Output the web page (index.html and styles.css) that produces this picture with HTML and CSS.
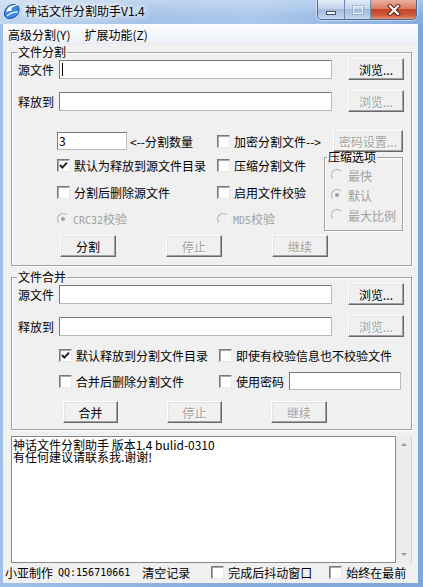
FILE: index.html
```html
<!DOCTYPE html>
<html>

<head>
	<meta charset="utf-8">
	<meta name="viewport" content="width=device-width, initial-scale=1">
	<title>神话文件分割助手V1.4</title>
	<link rel="stylesheet" href="styles.css">
</head>

<body>
	<div class="window">
		<div class="titlebar">
			<svg class="app-icon" width="18" height="18" viewBox="0 0 18 18">
				<path d="M1.5 12 C1.5 7 5 3 10 2.5 C14 2.2 16.5 4.5 16 8.5 C15.5 13.5 11 16.5 6 16.5 C3.5 16.5 1.5 14.5 1.5 12Z" fill="#3c86dc" stroke="#1c4f9c" stroke-width="1"/>
				<path d="M3 10 C4 6 7 3.5 11 3 C9 5 8 7 8.5 9 C6.5 9 4.5 9.5 3 10Z" fill="#fff"/>
				<path d="M4 14 C7 11 11 10 15 10" stroke="#d6ecff" stroke-width="1.6" fill="none"/>
				<path d="M9 5 L15 2" stroke="#fff" stroke-width="1.2"/>
			</svg>
			<span class="title">神话文件分割助手V1.4</span>
			<div class="caption-buttons">
				<span class="cap min"><i></i></span>
				<span class="cap max"><i></i></span>
				<span class="cap close">
					<svg width="14" height="12" viewBox="0 0 14 12">
						<path d="M3 2 L11 10 M11 2 L3 10" stroke="#5a1a10" stroke-width="4" stroke-linecap="square"/>
						<path d="M3 2 L11 10 M11 2 L3 10" stroke="#fff" stroke-width="2.2" stroke-linecap="square"/>
					</svg>
				</span>
			</div>
		</div>

		<div class="frame">
			<div class="client">
				<div class="menubar">
					<span>高级分割(Y)</span>
					<span>扩展功能(Z)</span>
				</div>

				<fieldset class="group split">
					<legend>文件分割</legend>
					<div class="file-row">
						<span class="row-label">源文件</span>
						<div class="edit path"><span class="caret"></span></div>
						<button class="btn browse">浏览...</button>
					</div>
					<div class="file-row">
						<span class="row-label">释放到</span>
						<div class="edit path"></div>
						<button class="btn browse" disabled>浏览...</button>
					</div>

					<div class="split-grid">
						<div class="count-cell">
							<div class="edit count">3</div>
							<span>&lt;--分割数量</span>
						</div>
						<div class="encrypt-cell">
							<label class="check"><span class="box"></span>加密分割文件--&gt;</label>
							<button class="btn pwd" disabled>密码设置...</button>
						</div>
						<label class="check checked"><span class="box"></span>默认为释放到源文件目录</label>
						<label class="check"><span class="box"></span>压缩分割文件</label>
						<fieldset class="compress">
							<legend>压缩选项</legend>
							<label class="radio off"><span class="dot"></span>最快</label>
							<label class="radio off on"><span class="dot"></span>默认</label>
							<label class="radio off"><span class="dot"></span>最大比例</label>
						</fieldset>
						<label class="check"><span class="box"></span>分割后删除源文件</label>
						<label class="check"><span class="box"></span>启用文件校验</label>
						<label class="radio off on"><span class="dot"></span><span><span class="mono">CRC32</span>校验</span></label>
						<label class="radio off"><span class="dot"></span><span><span class="mono">MD5</span>校验</span></label>
					</div>

					<div class="action-row">
						<button class="btn act">分割</button>
						<button class="btn act" disabled>停止</button>
						<button class="btn act" disabled>继续</button>
					</div>
				</fieldset>

				<fieldset class="group merge">
					<legend>文件合并</legend>
					<div class="file-row">
						<span class="row-label">源文件</span>
						<div class="edit path"></div>
						<button class="btn browse">浏览...</button>
					</div>
					<div class="file-row">
						<span class="row-label">释放到</span>
						<div class="edit path"></div>
						<button class="btn browse" disabled>浏览...</button>
					</div>

					<div class="merge-grid">
						<label class="check checked"><span class="box"></span>默认释放到分割文件目录</label>
						<label class="check"><span class="box"></span>即使有校验信息也不校验文件</label>
						<label class="check"><span class="box"></span>合并后删除分割文件</label>
						<div class="pwd-cell">
							<label class="check"><span class="box"></span>使用密码</label>
							<div class="edit pwd-edit"></div>
						</div>
					</div>

					<div class="action-row merge-actions">
						<button class="btn act">合并</button>
						<button class="btn act" disabled>停止</button>
						<button class="btn act" disabled>继续</button>
					</div>
				</fieldset>

				<div class="log">
					<div class="log-text">
						<div class="log-line">神话文件分割助手 版本1.4 bulid-0310</div>
						<div class="log-line">有任何建议请联系我.谢谢!</div>
					</div>
					<div class="scrollbar">
						<span class="arrow up"></span>
						<span class="arrow down"></span>
					</div>
				</div>

				<div class="statusbar">
					<span class="author">小亚制作</span>
					<span class="mono qq">QQ:156710661</span>
					<span class="clear">清空记录</span>
					<label class="check shake"><span class="box"></span>完成后抖动窗口</label>
					<label class="check ontop"><span class="box"></span>始终在最前</label>
				</div>
			</div>
		</div>
	</div>
</body>

</html>
```

FILE: styles.css
```css
* {
	box-sizing: border-box;
}

html,
body {
	margin: 0;
}

body {
	width: 423px;
	height: 587px;
	overflow: hidden;
	font-family: "Noto Sans CJK SC", sans-serif;
	font-size: 12px;
	color: #000;
	background: #86acde;
}

.window {
	width: 423px;
	height: 587px;
	display: flex;
	flex-direction: column;
	background: linear-gradient(to right, #9fc0ea, #86acde 50%, #7ea6da);
}

/* title bar */

.titlebar {
	height: 24px;
	display: flex;
	align-items: flex-start;
	padding-right: 6px;
	background:
		linear-gradient(to bottom, rgba(255, 255, 255, 0.3), rgba(255, 255, 255, 0) 70%),
		linear-gradient(to right, #c1d7f0, #a4c2e9 35%, #abc8eb 60%, #85acdf);
}

.app-icon {
	margin: 2px 0 0 3px;
	flex: none;
}

.title {
	margin: 4px 0 0 4px;
	line-height: 14px;
	text-shadow: 0 0 4px #fff, 0 0 8px #fff, 0 0 10px #fff;
}

.caption-buttons {
	display: flex;
	margin-left: auto;
	height: 20px;
	border: 1px solid #4a6890;
	border-top: 0;
	border-radius: 0 0 5px 5px;
	overflow: hidden;
	box-shadow: 0 0 0 1px rgba(255, 255, 255, 0.45);
}

.cap {
	display: flex;
	align-items: center;
	justify-content: center;
	height: 100%;
}

.cap.min,
.cap.max {
	background: linear-gradient(to bottom, #e3ecf7, #c2d4ea 45%, #a4bddd 50%, #b9cfeb 90%, #cfe0f4);
	border-right: 1px solid #6f8aae;
}

.cap.min {
	width: 27px;
}

.cap.max {
	width: 26px;
}

.cap.min i {
	width: 10px;
	height: 4px;
	margin-top: 6px;
	background: #fff;
	border: 1px solid #3d4f66;
}

.cap.max i {
	width: 10px;
	height: 8px;
	border: 1px solid rgba(255, 255, 255, 0.75);
	box-shadow: 0 0 0 1px rgba(90, 120, 160, 0.35);
}

.cap.close {
	width: 45px;
	background: linear-gradient(to bottom, #eab0a1, #dc7c63 45%, #c6442a 50%, #cd5a3a 80%, #e59474);
}

/* window body */

.frame {
	flex: 1;
	display: flex;
	padding: 0 5px 4px 3px;
}

.client {
	flex: 1;
	display: flex;
	flex-direction: column;
	background: #f0f0f0;
}

.menubar {
	height: 20px;
	display: flex;
	align-items: center;
	gap: 14px;
	padding: 1px 0 0 5px;
	background: linear-gradient(to bottom, #fbfcfe, #eef2f8);
	border-bottom: 1px solid #e6ebf2;
}

/* group boxes */

.group {
	width: 401px;
	margin: 0 0 0 8px;
	padding: 0 7px 8px 6px;
	border: 1px solid #a0a0a0;
	box-shadow: inset 1px 1px 0 #fff, 1px 1px 0 #fff;
	min-width: 0;
}

.group legend,
.compress legend {
	padding: 0 1px;
	margin-left: -1px;
	line-height: 12px;
}

.group.split {
	margin-top: 2px;
}

.group.merge {
	margin-top: 5px;
	padding-bottom: 6px;
}

.file-row {
	display: flex;
	align-items: center;
	height: 22px;
}

.file-row + .file-row {
	margin-top: 10px;
}

.row-label {
	width: 41px;
}

.edit {
	height: 19px;
	background: #fff;
	border: 1px solid;
	border-color: #7a7a7a #b9b9b9 #b9b9b9 #7a7a7a;
	line-height: 16px;
	padding-left: 2px;
}

.edit.path {
	width: 273px;
}

.caret {
	display: inline-block;
	width: 1px;
	height: 13px;
	margin-top: 2px;
	background: #000;
	vertical-align: top;
}

.btn {
	height: 22px;
	padding: 0;
	font-family: "Noto Sans CJK SC", sans-serif;
	font-size: 12px;
	color: #000;
	background: #f0f0f0;
	border: 1px solid;
	border-color: #fff #696969 #696969 #fff;
	box-shadow: inset -1px -1px 0 #a0a0a0, inset 1px 1px 0 #e3e3e3;
}

.btn:disabled {
	color: #a0a0a0;
	text-shadow: 1px 1px 0 #fff;
}

.btn.browse {
	width: 56px;
	margin-left: auto;
}

/* split grid */

.split-grid {
	display: grid;
	grid-template-columns: 160px 107px 79px;
	grid-template-rows: 22px 27px 27px 25px;
	align-items: center;
	margin: 18px 0 0 39px;
}

.count-cell {
	display: flex;
	align-items: center;
	gap: 3px;
}

.edit.count {
	width: 70px;
	height: 18px;
	line-height: 15px;
	padding-left: 1px;
}

.encrypt-cell {
	grid-column: 2 / 4;
	display: flex;
	align-items: center;
}

.btn.pwd {
	width: 70px;
	margin-left: auto;
}

.check,
.radio {
	display: flex;
	align-items: center;
	gap: 4px;
	white-space: nowrap;
}

.box {
	width: 13px;
	height: 13px;
	flex: none;
	background: #fff;
	border: 1px solid;
	border-color: #7a7a7a #e8e8e8 #e8e8e8 #7a7a7a;
	box-shadow: inset 1px 1px 0 #a8a8a8;
}

.check.checked .box {
	background: #fff url("data:image/svg+xml,%3Csvg xmlns='http://www.w3.org/2000/svg' width='11' height='11'%3E%3Cpath d='M2 5 L4.3 7.6 L9 2.6' stroke='%23202020' stroke-width='2' fill='none'/%3E%3C/svg%3E") center no-repeat;
}

.dot {
	width: 12px;
	height: 12px;
	flex: none;
	border-radius: 50%;
	border: 1px solid;
	border-color: #b3b3b3 #f7f7f7 #f7f7f7 #b3b3b3;
	display: flex;
	align-items: center;
	justify-content: center;
}

.radio.on .dot::after {
	content: "";
	width: 4px;
	height: 4px;
	border-radius: 50%;
	background: #a0a0a0;
}

.radio.off {
	color: #a0a0a0;
}

.mono {
	font-family: "DejaVu Sans Mono", "Liberation Mono", monospace;
	font-size: 10px;
}

.compress {
	grid-column: 3;
	grid-row: 2 / 5;
	align-self: start;
	height: 80px;
	margin: -1px 0 0;
	padding: 2px 0 0 6px;
	border: 1px solid #a0a0a0;
	box-shadow: inset 1px 1px 0 #fff, 1px 1px 0 #fff;
	min-width: 0;
}

.compress legend {
	margin-left: -4px;
}

.compress .radio {
	height: 20px;
	gap: 5px;
}

.action-row {
	display: flex;
	gap: 50px;
	margin-top: 4px;
	padding-left: 42px;
}

.btn.act {
	width: 56px;
}

/* merge group */

.merge-grid {
	display: grid;
	grid-template-columns: 160px auto;
	grid-template-rows: 26px 26px;
	align-items: center;
	margin: 5px 0 0 41px;
}

.pwd-cell {
	display: flex;
	align-items: center;
	gap: 5px;
}

.edit.pwd-edit {
	width: 112px;
	height: 18px;
}

.merge-actions {
	margin-top: 7px;
	padding-left: 45px;
	gap: 0;
}

.merge-actions .btn.act {
	width: 55px;
}

.merge-actions .btn.act + .btn.act {
	margin-left: 49px;
}

.merge-actions .btn.act:last-child {
	width: 56px;
	margin-left: 48px;
}

/* log */

.log {
	display: flex;
	width: 401px;
	height: 127px;
	margin: 6px 0 0 8px;
}

.log-text {
	flex: 1;
	background: #fff;
	border: 1px solid #8a8a8a;
	padding: 1px 1px;
}

.log-line {
	height: 12px;
	line-height: 13px;
	white-space: nowrap;
}

.scrollbar {
	width: 16px;
	display: flex;
	flex-direction: column;
	justify-content: space-between;
	align-items: center;
	padding: 7px 0;
	background: #ececec;
	border-right: 1px solid #d0d0d0;
}

.arrow {
	width: 0;
	height: 0;
	border-left: 3px solid transparent;
	border-right: 3px solid transparent;
}

.arrow.up {
	border-bottom: 3px solid #9a9a9a;
}

.arrow.down {
	border-top: 3px solid #9a9a9a;
}

/* status bar */

.statusbar {
	flex: 1;
	display: flex;
	align-items: center;
	padding: 0 0 1px 2px;
	white-space: nowrap;
}

.qq {
	margin-left: 5px;
}

.clear {
	margin-left: 12px;
}

.shake {
	margin-left: 21px;
}

.ontop {
	margin-left: 17px;
}
```
